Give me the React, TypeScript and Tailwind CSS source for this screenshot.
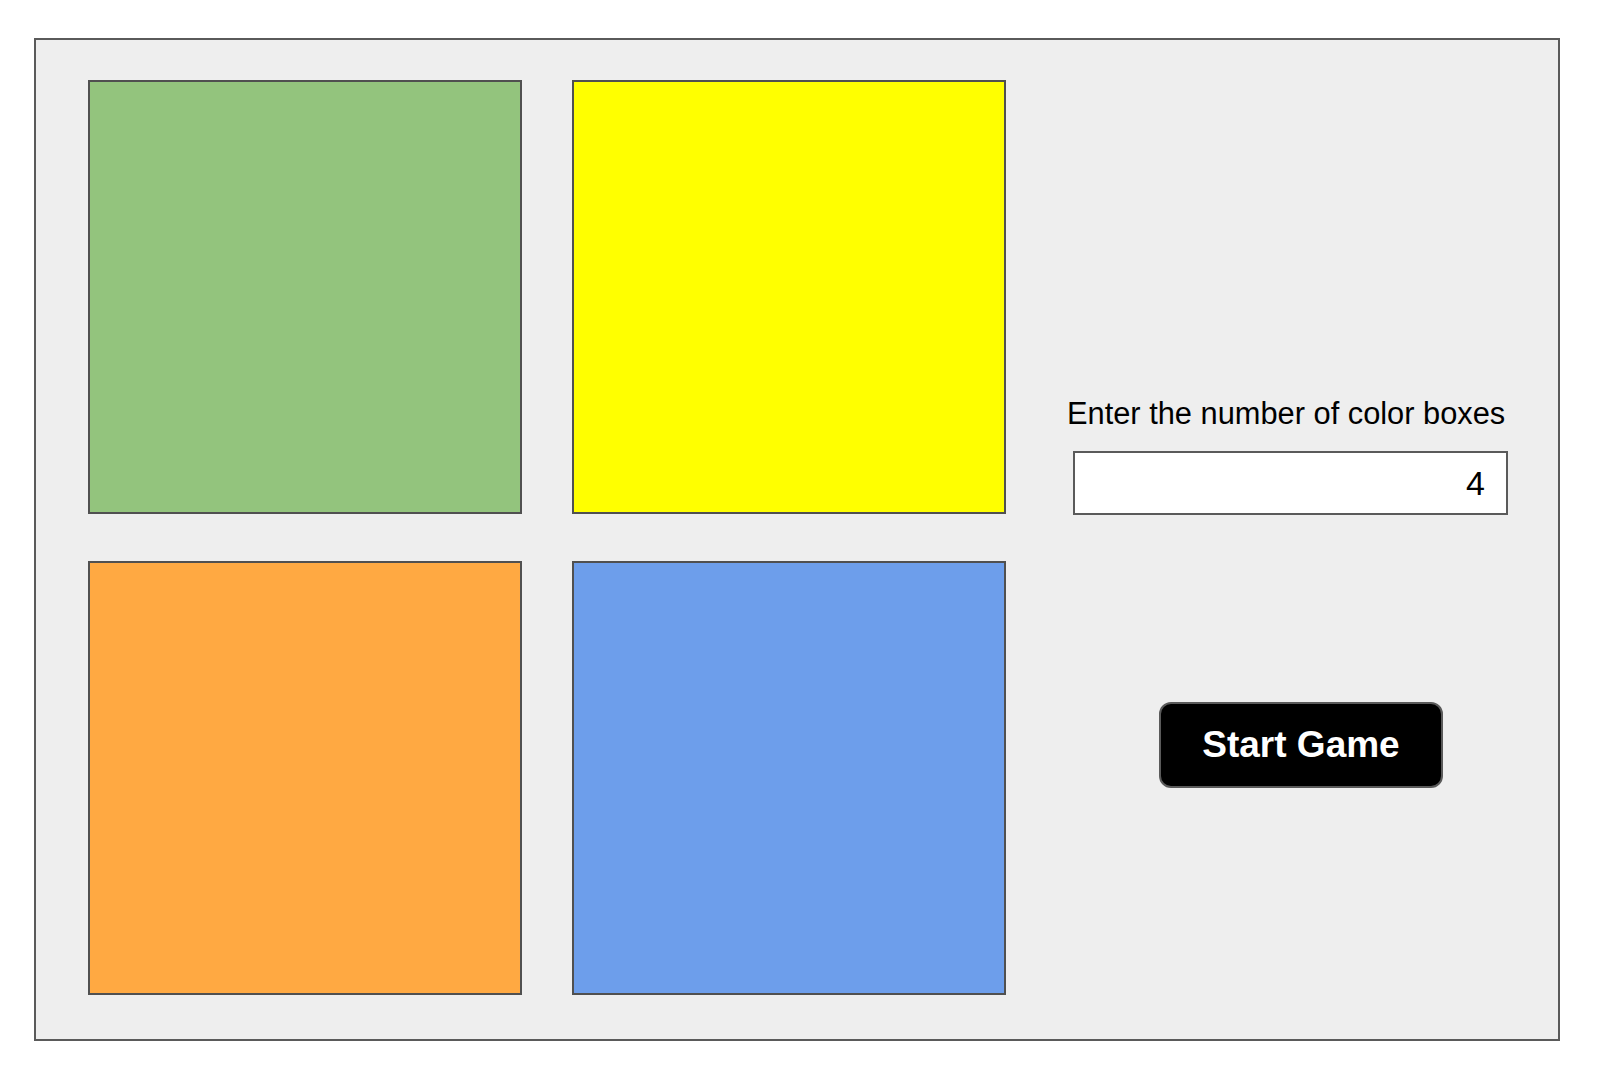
import React, { useState } from "react";

// colour boxes shown in the game board
const boxColors: string[] = ["bg-[#93c47d]", "bg-[#ffff00]", "bg-[#ffa942]", "bg-[#6d9eeb]"];

export default function App() {
  const [count, setCount] = useState<string>("4");

  return (
    <div
      className="w-[1600px] h-[1088px] bg-white pl-[34px] pt-[38px]"
      style={{ fontFamily: '"Liberation Sans", Arial, sans-serif' }}
    >
      <div className="flex w-[1526px] h-[1003px] border-2 border-[#5a5a5a] bg-[#eeeeee] pl-[52px] pt-[40px]">
        {/* Board */}
        <div className="grid grid-cols-[434px_434px] grid-rows-[434px_434px] gap-x-[50px] gap-y-[47px]">
          {boxColors.map((color, index) => (
            <div key={index} className={`border-2 border-[#505050] ${color}`} />
          ))}
        </div>

        {/* Controls */}
        <div className="flex flex-col items-start ml-[61px]">
          <label className="mt-[317px] text-[30.8px] leading-[34px] text-black">
            Enter the number of color boxes
          </label>
          <input
            type="number"
            value={count}
            onChange={(e) => setCount(e.target.value)}
            className="mt-[20px] ml-[6px] w-[435px] h-[64px] border-2 border-[#5a5a5a] bg-white pr-[21px] text-right text-[34px] text-black outline-none [appearance:textfield] [&::-webkit-inner-spin-button]:appearance-none"
          />
          <button className="mt-[187px] ml-[92px] w-[284px] h-[86px] rounded-xl border-2 border-[#5a5a5a] bg-black text-[37px] font-bold text-white">
            Start Game
          </button>
        </div>
      </div>
    </div>
  );
}
